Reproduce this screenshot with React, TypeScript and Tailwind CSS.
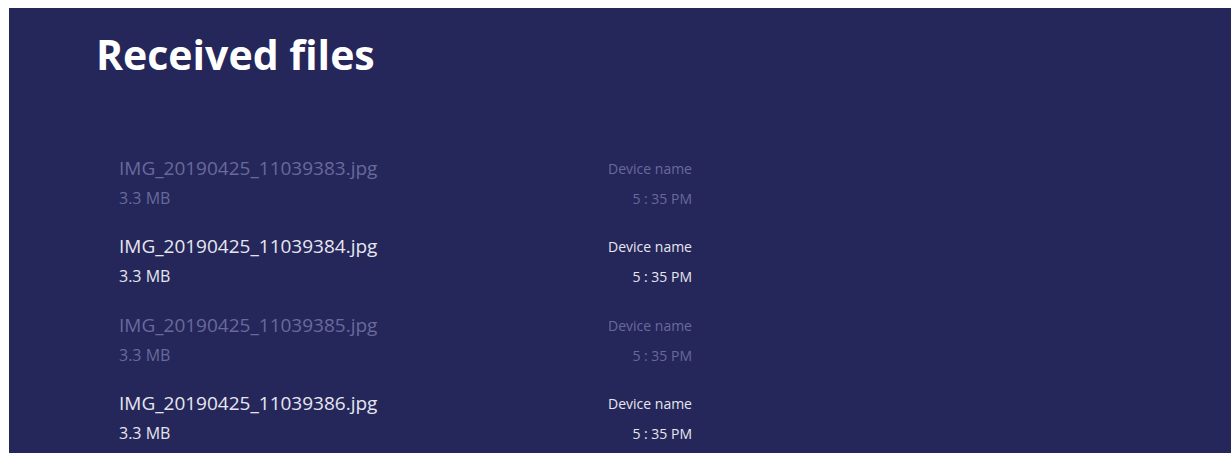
const files = [
  { name: 'IMG_20190425_11039383.jpg', faded: true },
  { name: 'IMG_20190425_11039384.jpg', faded: false },
  { name: 'IMG_20190425_11039385.jpg', faded: true },
  { name: 'IMG_20190425_11039386.jpg', faded: false },
];

function FileRow({ name, faded }: { name: string; faded: boolean }) {
  const tone = faded ? 'text-[#686a9a]' : 'text-[#e6e6f0]';
  return (
    <div className={`flex w-[573px] items-start justify-between h-[78.4px] ${tone}`}>
      <div className="flex flex-col">
        <span className="text-[19px] leading-[24px]">{name}</span>
        <span className="mt-[8px] text-[16px] leading-[20px]">3.3 MB</span>
      </div>
      <div className="flex flex-col items-end pt-[4px]">
        <span className="text-[14px] leading-[18px]">Device name</span>
        <span className="mt-[12px] text-[14px] leading-[18px]">5 : 35 PM</span>
      </div>
    </div>
  );
}

export default function App() {
  return (
    <div className="h-[453px] w-[1231px] bg-white pt-[8px] pl-[9px] overflow-hidden" style={{ fontFamily: '"Open Sans", "Noto Sans", sans-serif' }}>
      <div className="h-full bg-[#25265a] pl-[87px] pt-[24px]">
        <h1 className="text-[41px] font-bold leading-[44px] text-white">Received files</h1>
        <div className="mt-[80px] pl-[23px]">
          {files.map((f) => (
            <FileRow key={f.name} name={f.name} faded={f.faded} />
          ))}
        </div>
      </div>
    </div>
  );
}
